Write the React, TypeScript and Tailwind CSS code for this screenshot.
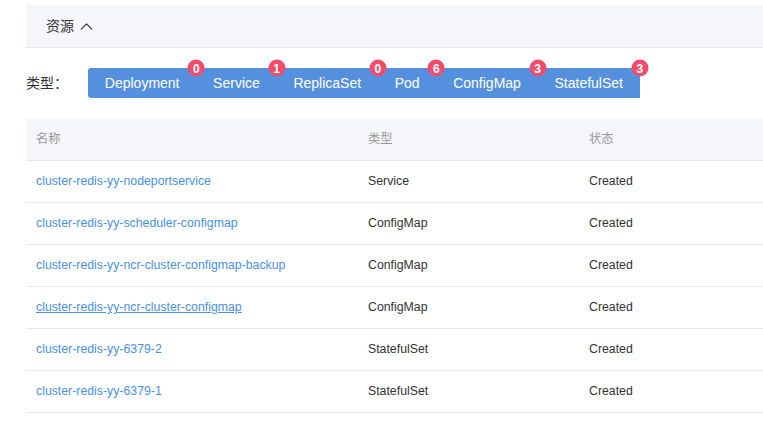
import { ChevronUp } from "lucide-react";

const types = [
  { label: "Deployment", count: 0 },
  { label: "Service", count: 1 },
  { label: "ReplicaSet", count: 0 },
  { label: "Pod", count: 6 },
  { label: "ConfigMap", count: 3 },
  { label: "StatefulSet", count: 3 },
];

const rows = [
  { name: "cluster-redis-yy-nodeportservice", kind: "Service", status: "Created" },
  { name: "cluster-redis-yy-scheduler-configmap", kind: "ConfigMap", status: "Created" },
  { name: "cluster-redis-yy-ncr-cluster-configmap-backup", kind: "ConfigMap", status: "Created" },
  { name: "cluster-redis-yy-ncr-cluster-configmap", kind: "ConfigMap", status: "Created", hover: true },
  { name: "cluster-redis-yy-6379-2", kind: "StatefulSet", status: "Created" },
  { name: "cluster-redis-yy-6379-1", kind: "StatefulSet", status: "Created" },
];

export default function App() {
  return (
    <div className="h-[425px] w-[763px] overflow-hidden bg-white pl-[26px] pt-[5px] font-['Liberation_Sans','Noto_Sans_CJK_SC',sans-serif] text-[#333]">
      {/* Section header */}
      <div className="flex h-[43px] w-[760px] items-center border-b border-[#e4e6eb] bg-[#f5f6fa] pl-5">
        <span className="text-[14px] text-[#333]">资源</span>
        <ChevronUp size={21} strokeWidth={1.4} className="ml-[2px] text-[#333]" />
      </div>

      {/* Type filter */}
      <div className="mt-[20px] flex items-center">
        <span className="w-[62px] text-[14px] text-[#333]">类型：</span>
        <div className="flex">
          {types.map((t, i) => (
            <div
              key={t.label}
              className={
                "relative flex h-[30px] items-center bg-[#5590df] px-[16.8px] text-[14px] text-white" +
                (i === 0 ? " rounded-l-[3px]" : "")
              }
            >
              {t.label}
              <span className="absolute right-0 top-0 z-10 flex h-[17px] w-[17px] translate-x-1/2 -translate-y-1/2 items-center justify-center rounded-full bg-[#ef4d6c] text-[12px] font-bold text-white">
                {t.count}
              </span>
            </div>
          ))}
        </div>
      </div>

      {/* Resource table */}
      <div className="mt-[20px] w-[760px] text-[12.3px]">
        <div className="flex h-[43px] items-center border-b border-[#e8e9ed] bg-[#f5f6fa] text-[#999]">
          <div className="w-[332px] pl-[10px]">名称</div>
          <div className="w-[221px] pl-[10px]">类型</div>
          <div className="flex-1 pl-[10px]">状态</div>
        </div>
        {rows.map((r) => (
          <div key={r.name} className="flex h-[42px] items-center border-b border-[#e8e9ed]">
            <div className="w-[332px] pl-[10px]">
              <a className={"cursor-pointer text-[#4a90e2]" + (r.hover ? " underline" : "")}>{r.name}</a>
            </div>
            <div className="w-[221px] pl-[10px] text-[#333]">{r.kind}</div>
            <div className="flex-1 pl-[10px] text-[#333]">{r.status}</div>
          </div>
        ))}
      </div>
    </div>
  );
}
